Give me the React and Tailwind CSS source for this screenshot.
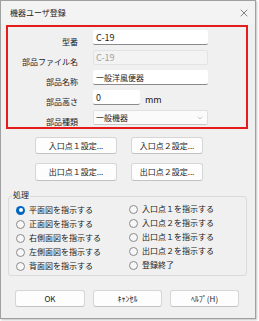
import { X, ChevronDown } from 'lucide-react'

const jp = { fontFamily: '"Noto Sans CJK JP", "Noto Sans", sans-serif' }

function Field({ label, children }) {
  return (
    <div className="flex h-[15px] mb-[5px]">
      <div className="w-[70px] text-right text-[8px] leading-[8px] pt-[8px] text-[#1a1a1a]">{label}</div>
      <div className="ml-[15px] flex items-center">{children}</div>
    </div>
  )
}

function Btn({ children, className = '' }) {
  return (
    <div className={`h-[17px] flex items-center justify-center bg-[#fdfdfd] border border-[#d6d6d6] border-b-[#c2c2c2] rounded-[3px] text-[8px] text-[#1a1a1a] ${className}`}>
      {children}
    </div>
  )
}

function Radio({ label, checked }) {
  return (
    <div className="flex items-center h-[14px] gap-[4px]">
      {checked ? (
        <span className="w-[9px] h-[9px] rounded-full bg-[#0067c0] flex items-center justify-center">
          <span className="w-[4px] h-[4px] rounded-full bg-white" />
        </span>
      ) : (
        <span className="w-[9px] h-[9px] rounded-full border border-[#8a8a8a] bg-[#f7f7f7]" />
      )}
      <span className="text-[8px] text-[#1a1a1a]">{label}</span>
    </div>
  )
}

export default function App() {
  return (
    <div className="w-[259px] h-[321px] bg-white" style={jp}>
      <div className="w-[256px] h-[319px] border border-[#a0a0a0] bg-[#f0f0f0] flex flex-col shadow-[1px_1px_2px_rgba(0,0,0,0.25)]">
        <div className="h-[23px] flex items-center justify-between pl-[9px] pr-[5px] bg-[#f3f3f3] text-[8px] text-[#1a1a1a]">
          <span>機器ユーザ登録</span>
          <X size={12} strokeWidth={1.2} className="text-[#333]" />
        </div>

        <div className="ml-[5px] mt-[1px] w-[242px] h-[104px] border-2 border-[#e51c1c] pt-[3px]">
          <Field label="型番">
            <div className="w-[115px] h-[15px] bg-white border-b border-[#8a8a8a] rounded-[2px] text-[9px] leading-[15px] pl-[3px] text-[#1a1a1a]">C-19</div>
          </Field>
          <Field label="部品ファイル名">
            <div className="w-[115px] h-[15px] bg-[#f3f3f3] border border-[#e3e3e3] rounded-[2px] text-[9px] leading-[13px] pl-[2px] text-[#a0a0a0]">C-19</div>
          </Field>
          <Field label="部品名称">
            <div className="w-[115px] h-[15px] bg-white border-b border-[#8a8a8a] rounded-[2px] text-[8px] leading-[15px] pl-[3px] text-[#1a1a1a]">一般洋風便器</div>
          </Field>
          <div className="flex h-[15px] mb-[5px] mt-[1px]">
            <div className="w-[70px] text-right text-[8px] leading-[8px] pt-[8px] text-[#1a1a1a]">部品高さ</div>
            <div className="ml-[15px] w-[47px] h-[15px] bg-white border-b border-[#8a8a8a] rounded-[2px] text-[9px] leading-[15px] pl-[3px] text-[#1a1a1a]">0</div>
            <div className="ml-[5px] pt-[5px] text-[9px] leading-[9px] text-[#1a1a1a]">mm</div>
          </div>
          <Field label="部品種類">
            <div className="w-[115px] h-[15px] bg-[#fbfbfb] border border-[#e0e0e0] border-b-[#c8c8c8] rounded-[2px] text-[8px] flex items-center justify-between pl-[2px] pr-[3px] text-[#1a1a1a]">
              <span>一般機器</span>
              <ChevronDown size={8} strokeWidth={1.2} className="text-[#777]" />
            </div>
          </Field>
        </div>

        <div className="flex ml-[34px] mt-[8px] gap-[14px]">
          <Btn className="w-[82px]">入口点１設定...</Btn>
          <Btn className="w-[72px]">入口点２設定...</Btn>
        </div>
        <div className="flex ml-[34px] mt-[9px] gap-[14px]">
          <Btn className="w-[82px] h-[18px]">出口点１設定...</Btn>
          <Btn className="w-[72px] h-[18px]">出口点２設定...</Btn>
        </div>

        <div className="relative ml-[7px] mt-[15px] w-[239px] h-[80px] border border-[#dadada] rounded-[3px] pt-[6px]">
          <span className="absolute left-[3px] top-[-7px] px-[1px] bg-[#f0f0f0] text-[8px] leading-[10px] text-[#1a1a1a]">処理</span>
          <div className="flex">
            <div className="w-[120px] pl-[7px] flex flex-col">
              <Radio checked label="平面図を指示する" />
              <Radio label="正面図を指示する" />
              <Radio label="右側面図を指示する" />
              <Radio label="左側面図を指示する" />
              <Radio label="背面図を指示する" />
            </div>
            <div className="flex flex-col -mt-[1px]">
              <Radio label="入口点１を指示する" />
              <Radio label="入口点２を指示する" />
              <Radio label="出口点１を指示する" />
              <Radio label="出口点２を指示する" />
              <Radio label="登録終了" />
            </div>
          </div>
        </div>

        <div className="flex ml-[14px] mt-[14px] gap-[8px]">
          <Btn className="w-[70px] border-[#5b9bd5] border-b-[#5b9bd5]">OK</Btn>
          <Btn className="w-[69px]">ｷｬﾝｾﾙ</Btn>
          <Btn className="w-[69px]">ﾍﾙﾌﾟ(H)</Btn>
        </div>
      </div>
    </div>
  )
}
